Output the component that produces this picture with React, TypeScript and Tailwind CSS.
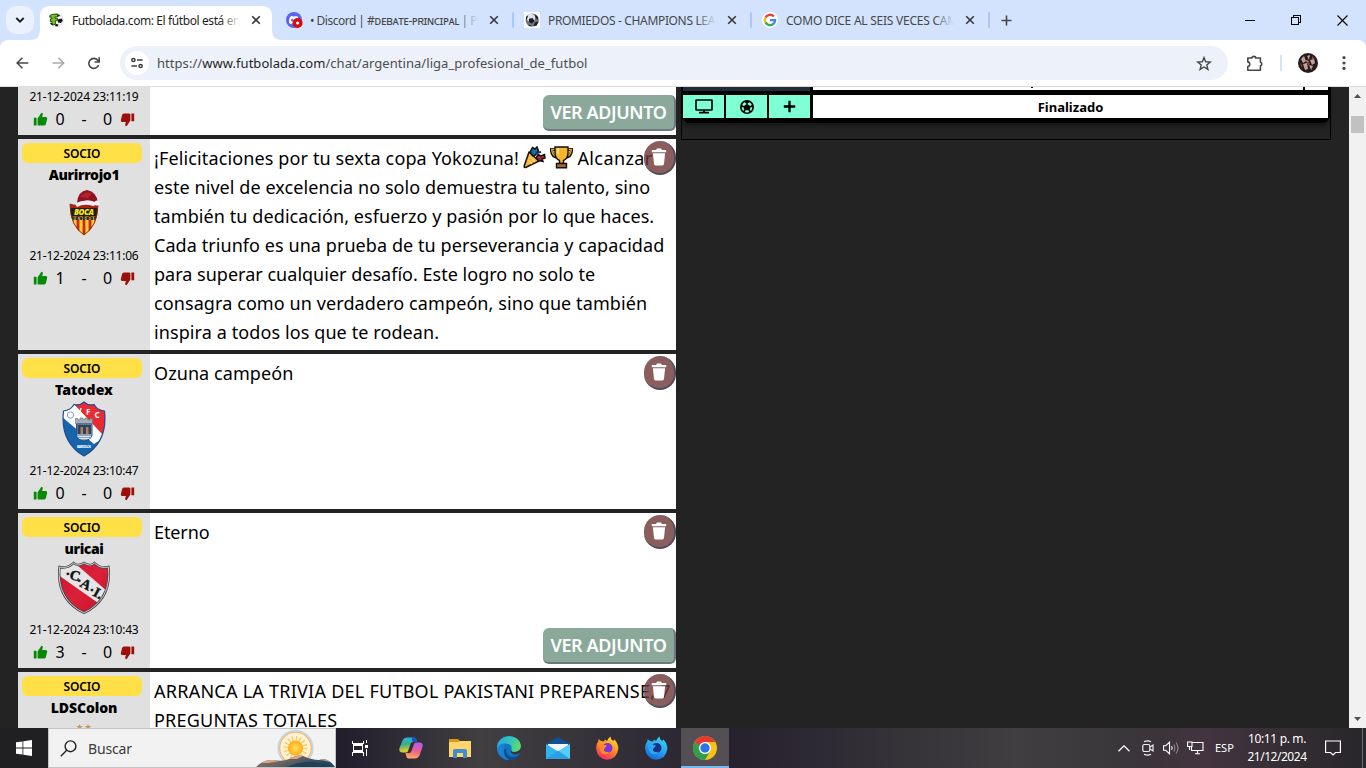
import React from "react";

const Close = () => (
  <svg width="10" height="10" viewBox="0 0 10 10" className="shrink-0">
    <path d="M1.2 1.2 8.8 8.8M8.8 1.2 1.2 8.8" stroke="#36383b" strokeWidth="1.6" fill="none" />
  </svg>
);

const FutboladaIcon = () => (
  <svg width="16" height="16" viewBox="0 0 16 16">
    <circle cx="8.5" cy="8" r="6.8" fill="#f2f2f2" stroke="#d0d0d0" strokeWidth=".6" />
    <path d="M9.5 2.2 12 3 11 4.500 9.500 4.500ZM10 7.500 13.500 6.500 14.800 8.500 13 11 10 10.500ZM8 12 10.500 12.500 9.500 14.500 7 14ZM2 11 4 11 5 13.500 3 12.500Z" fill="#111" />
    <path d="M1.800 3.500 4 2.500 9.500 2 9.800 4.500 6.800 5 6.800 6.300 9.500 6.200 9.400 8.600 7.200 8.800 7.500 12.500 4.200 12.800 4 9.500 2.500 9.500 2.500 7 4 6.800 3.800 5 1.800 5.200Z" fill="#72cc10" stroke="#15240a" strokeWidth=".8" />
  </svg>
);
const DiscordIcon = () => (
  <svg width="17" height="16" viewBox="0 0 17 16">
    <circle cx="8" cy="8" r="8" fill="#5865f2" />
    <path d="M4 5Q5 4 6.7 3.9L7.1 4.6H8.9L9.3 3.9Q11 4 12 5 13.3 7.5 13 11 12 12 10.6 12L10 11.2H6L5.4 12Q4 12 3 11 2.8 7.5 4 5Z" fill="#fff" />
    <ellipse cx="6.3" cy="8.2" rx="1.2" ry="1.4" fill="#5865f2" />
    <circle cx="11.600" cy="11" r="5" fill="#d90a0a" />
    <circle cx="11.600" cy="11" r="1.6" fill="#fff" />
  </svg>
);
const BallIcon = () => (
  <svg width="16" height="16" viewBox="0 0 16 16">
    <rect width="16" height="16" fill="#fafbff" />
    <circle cx="8.2" cy="8" r="6.6" fill="#70757e" />
    <circle cx="7" cy="6" r="4.200" fill="#dfe2e8" />
    <path d="M5 6.8 8.6 6 10.4 9 8 11.6 4.8 10ZM11 2.6 14 5 13.6 8 11.6 5.6ZM1.8 6 3 3.6 4 4.5 2.4 8ZM3.4 12.4 6 13 8.4 14.6 5.4 14ZM11 10.500 14.500 9.500 12.500 13.800 9.500 14Z" fill="#191c22" />
  </svg>
);
const GoogleIcon = () => (
  <svg width="16" height="16" viewBox="0 0 16 16">
    <circle cx="8" cy="8" r="8" fill="#fff" />
    <g fill="none" strokeWidth="2.3">
      <path d="M11.9 4.5A5.1 5.1 0 0 0 3.5 5.6" stroke="#ea4335" />
      <path d="M3.5 5.6A5.1 5.1 0 0 0 3.5 10.4" stroke="#fbbc05" />
      <path d="M3.5 10.4A5.1 5.1 0 0 0 11.4 11.8" stroke="#34a853" />
      <path d="M11.2 12A5.1 5.1 0 0 0 13.1 8.1H8" stroke="#4285f4" />
    </g>
  </svg>
);

const tabs = [
  { icon: <FutboladaIcon />, title: "Futbolada.com: El fútbol está en", active: true, fit: "tracking-[-0.4px] text-[#1f1f1f]", fade: "from-white" },
  { icon: <DiscordIcon />, title: "• Discord | #ᴅᴇʙᴀᴛᴇ-ᴘʀɪɴᴄɪᴘᴀʟ | P", active: false, fit: "tracking-[-0.51px] text-[#474747]", fade: "from-[#d3e3fd]" },
  { icon: <BallIcon />, title: "PROMIEDOS - CHAMPIONS LEA", active: false, fit: "tracking-[-0.35px] text-[#474747]", fade: "from-[#d3e3fd]" },
  { icon: <GoogleIcon />, title: "COMO DICE AL SEIS VECES CAM", active: false, fit: "tracking-[-0.24px] text-[#474747]", fade: "from-[#d3e3fd]" },
];

function TabStrip() {
  return (
    <div className="flex h-10 shrink-0 items-start bg-[#d3e3fd]">
      <button className="ml-1.5 mt-1.5 flex size-7 items-center justify-center rounded-[10px] bg-[#ebf2fe]">
        <svg width="10" height="8" viewBox="0 0 10 8"><path d="M1.3 2 5 5.7 8.7 2" stroke="#1f1f1f" strokeWidth="1.9" fill="none" /></svg>
      </button>
      <div className="ml-1 flex">
        {tabs.map((t) => (
          <div key={t.title} className="relative flex h-10 w-[238px] items-center">
            {t.active && (
              <svg className="absolute left-[-8px] top-1.5" width="252" height="34" viewBox="0 0 252 34">
                <path d="M0 34Q10 34 10 24V10Q10 0 20 0H232Q242 0 242 10V24Q242 34 252 34Z" fill="#fff" />
              </svg>
            )}
            <div className="relative flex w-full items-center pl-[10px]">
              <div className="w-6 shrink-0">{t.icon}</div>
              <div className="relative w-[168px] overflow-hidden">
                <div className={"whitespace-nowrap text-[12px] leading-4 pt-px " + t.fit}>{t.title}</div>
                <div className={"absolute inset-y-0 right-0 w-5 bg-linear-to-l to-transparent " + t.fade} />
              </div>
              <div className="ml-[11px] flex flex-1 items-center justify-between">
                <Close />
                {!t.active && <div className="h-4 w-0.5 rounded-full bg-[#a8c7fa]" />}
              </div>
            </div>
          </div>
        ))}
      </div>
      <svg className="ml-[11px] mt-[15px]" width="11" height="11" viewBox="0 0 11 11"><path d="M5.5 .5v10M.5 5.5h10" stroke="#474747" strokeWidth="1.6" /></svg>
      <div className="ml-auto flex h-10 items-center pr-[18px] text-black">
        <svg width="10" height="10" viewBox="0 0 10 10" shapeRendering="crispEdges"><path d="M0 5.5h10" stroke="#000" /></svg>
        <svg className="ml-9" width="11" height="11" viewBox="0 0 11 11" fill="none" stroke="#000" shapeRendering="crispEdges"><path d="M.5 2.5h7v7h-7zM2.5 2.5v-2h7v7h-2" /></svg>
        <svg className="ml-[35px]" width="11" height="11" viewBox="0 0 11 11" stroke="#000" strokeWidth="1.1"><path d="M.5 .5l10 10M10.5 .5l-10 10" /></svg>
      </div>
    </div>
  );
}

function Toolbar() {
  return (
    <div className="shrink-0 bg-[#d3e3fd]">
      <div className="flex h-[47px] items-center rounded-t-lg border-b border-[#dedede] bg-white text-[#474747]">
        <svg className="ml-4" width="13" height="12" viewBox="0 0 13 12" fill="none" stroke="#474747" strokeWidth="1.5"><path d="M12.3 6H1.2M6.4 .7 1.1 6l5.3 5.3" /></svg>
        <svg className="ml-[23px]" width="13" height="12" viewBox="0 0 13 12" fill="none" stroke="#a9a9a9" strokeWidth="1.5"><path d="M.5 6h11.1M6.4 .7 11.7 6l-5.3 5.3" /></svg>
        <svg className="ml-[23px]" width="12" height="13" viewBox="0 0 12 13" fill="none" stroke="#474747" strokeWidth="1.6"><path d="M10.6 8A5 5 0 1 1 9.7 3.2L11 4.6M11.2 .3V5H6.6" /></svg>
        <div className="ml-5 flex h-[34px] w-[1108px] items-center rounded-full bg-[#edf1fa] pl-[5px]">
          <div className="flex size-6 items-center justify-center rounded-full bg-white">
            <svg width="12" height="12" viewBox="0 0 12 12" fill="none" stroke="#3c3c3c" strokeWidth="1.5"><circle cx="2.4" cy="3" r="1.6" /><path d="M6 3h5.6M.4 9h5.6" /><circle cx="9.6" cy="9" r="1.6" /></svg>
          </div>
          <div className="ml-2 flex-1 whitespace-nowrap pt-0.5 text-[13px] tracking-[0.05px] text-[#4b4d50]">
            https://<span className="text-[#1f1f1f]">www.futbolada.com</span>/chat/argentina/liga_profesional_de_futbol
          </div>
          <svg className="mr-4" width="16" height="15" viewBox="0 0 16 15" fill="none" stroke="#474747" strokeWidth="1.4"><path d="M8 1.6 9.7 5.8 14.2 6.1 10.8 9 11.9 13.4 8 11 4.1 13.4 5.2 9 1.8 6.1 6.3 5.8Z" /></svg>
        </div>
        <svg className="ml-[18px]" width="17" height="17" viewBox="0 0 17 17" fill="none" stroke="#474747" strokeWidth="1.6"><path d="M1.8 3H6Q6 1.4 7.8 1.4T9.600 3H14.400V7.200Q15.800 7.400 15.800 9T14.400 10.800V15.2H1.8V11.5Q3.800 11.200 3.800 9.2T1.8 6.9Z" strokeLinejoin="round" /></svg>
        <div className="ml-[17px] h-4 w-0.5 bg-[#d3e3fd]" />
        <svg className="ml-4" width="20" height="20" viewBox="0 0 20 20">
          <circle cx="10" cy="10" r="10" fill="#2a1a1a" />
          <path d="M3 6 6 3 8 8 5 10ZM9 3 12 2 11 7ZM12 7 16 6 17 10 14 12ZM5 11 9 10 10 16 7 17ZM11 12 15 13 13 17ZM8 7 11 8 9 10Z" fill="#b5a59a" />
          <path d="M2 10 4 12 4 15ZM8 8 12 10 10 13ZM14 3 17 6 14 6Z" fill="#9a4038" />
        </svg>
        <svg className="ml-6" width="4" height="16" viewBox="0 0 4 16" fill="#474747"><circle cx="2" cy="2.6" r="1.6" /><circle cx="2" cy="8" r="1.6" /><circle cx="2" cy="13.4" r="1.6" /></svg>
      </div>
    </div>
  );
}

const Thumb = ({ down }: { down?: boolean }) => (
  <svg width="15" height="15" viewBox="0 0 15 15" className={down ? "rotate-180" : ""} fill={down ? "#9c0f0a" : "#068a06"}>
    <path d="M.8 5.8H3.6V13.6H.8ZM4.6 13V6.4L8.4 .8Q10.2 1 9.8 2.8L9.1 5H12.8Q14.4 5.2 14.2 6.8L12.9 12Q12.5 13.6 11 13.6H6Q5 13.5 4.6 13Z" />
  </svg>
);

function Votes({ up }: { up: number }) {
  return (
    <div className="flex h-6 items-center pl-[15px] text-[16px] leading-6">
      <Thumb />
      <span className="w-[24px] text-center">{up}</span>
      <span className="w-6 text-center">-</span>
      <span className="w-[23px] text-center">0</span>
      <div className="ml-px"><Thumb down /></div>
    </div>
  );
}

const DateLine = ({ time }: { time: string }) => (
  <div className="h-[18px] text-center text-[12px] leading-[20px] tracking-[-0.23px]">21-12-2024 {time}</div>
);

const Attach = () => (
  <button className="absolute bottom-1 right-0 h-[36px] w-[133px] rounded-md border-b-2 border-r-2 border-[#6f7780] bg-[#8aa99b] text-center text-[18px] font-semibold leading-[34px] tracking-[-0.38px] text-white">
    VER ADJUNTO
  </button>
);

const Trash = () => (
  <button className="absolute right-0 top-0.5 flex h-[34px] w-8 items-center justify-center rounded-full border-b-2 border-r-2 border-[#4d4f5c] bg-[#6e3636]/80">
    <svg width="16" height="18" viewBox="0 0 16 18" fill="#fff"><path d="M.8 2H5L6 .6H10L11 2H15.2V4.2H.8ZM1.9 5.2H14.1L13 16Q12.8 17.4 11.4 17.4H4.6Q3.2 17.4 3 16Z" /></svg>
  </button>
);

const BocaUnidos = () => (
  <svg width="32" height="46" viewBox="0 0 32 46">
    <clipPath id="bu"><path d="M2 14Q9 17 16 13 23 17 30 14 30 36 16 45 2 36 2 14Z" /></clipPath>
    <g clipPath="url(#bu)">
      <rect y="12" width="32" height="34" fill="#f7cf2e" />
      <path d="M4 10V46M10 10V46M16 10V46M22 10V46M28 10V46" stroke="#cf2418" strokeWidth="2.8" />
      <path d="M0 12H32V19H0Z" fill="#ae2118" />
      <path d="M3 18H29V26H3ZM0 26.500H32V30H0Z" fill="#221c12" />
    </g>
    <path d="M2 14Q9 17 16 13 23 17 30 14 30 36 16 45 2 36 2 14Z" fill="none" stroke="#8a3018" />
    <text x="16" y="25" textAnchor="middle" fontSize="8" fontWeight="900" fontStyle="italic" fill="#f5e51d" textLength="20">BOCA</text>
    <text x="16" y="29.800" textAnchor="middle" fontSize="3.500" fontWeight="700" fill="#d8c79a" textLength="21">UNIDOS</text>
    <path d="M9 13Q10 1 19 0 29 2 30 13L26 12Q20 8 9 13Z" fill="#8f1220" />
    <path d="M12 7Q16 1 24 3L20 8Z" fill="#b3232f" />
    <path d="M8 13Q17 9 27 12 28 16 25 16 16 13 9 17 7 15 8 13Z" fill="#efedf0" />
    <circle cx="29" cy="13" r="2.6" fill="#f7f5f7" />
  </svg>
);
const GilVicente = () => (
  <svg width="44" height="56" viewBox="0 0 44 56">
    <clipPath id="gv"><path d="M1.5 10Q9 9 12 3.5 18 5 22 1 26 5 32 3.5 35 9 42.500 10 46 41 22 55-2 41 1.500 10Z" /></clipPath>
    <g clipPath="url(#gv)">
      <rect width="44" height="56" fill="#1564ac" />
      <path d="M0 10 12 3 44 35 32 43 0 16Z" fill="#fff" />
      <path d="M12 3 40 33 44 33V0H12Z" fill="#ea2a33" />
    </g>
    <path d="M1.500 10Q9 9 12 3.500 18 5 22 1 26 5 32 3.500 35 9 42.500 10 46 41 22 55-2 41 1.500 10Z" fill="none" stroke="#1d4e8e" strokeWidth="1.200" />
    <circle cx="8.500" cy="14" r="3.200" fill="none" stroke="#7e9cc4" />
    <g fill="#fff" fontSize="8" fontWeight="700"><text x="14.500" y="12.500">V</text><text x="24" y="14">F</text><text x="32.500" y="17">C</text></g>
    <path d="M13.500 20V17.500H16V19H18V17H21V18.500H23V17H26V19H28V17.500H30.500V22.500H13.500Z" fill="#a9aeb6" stroke="#636d7c" strokeWidth=".6" />
    <path d="M14.500 23H30V34Q29 39 22 40 15 39 14.500 34Z" fill="#8fa2bb" stroke="#21518f" />
    <path d="M15.500 24H29V33H15.500Z" fill="#31425b" /><path d="M18.500 26H21V33H18.500ZM24 26H26.500V33H24Z" fill="#ad805a" />
    <path d="M15.500 35.500H29M17 37.500H27.500" stroke="#d9e5f2" strokeWidth="1" />
    <text x="22" y="47" textAnchor="middle" fontSize="3.500" fontWeight="700" fill="#fff" textLength="14">BARCELOS</text>
  </svg>
);
const Independiente = () => (
  <svg width="54" height="54" viewBox="0 0 52 54" preserveAspectRatio="none">
    <defs>
      <linearGradient id="cg" x1="0" y1="0" x2="1" y2="1"><stop offset="0" stopColor="#c8102e" /><stop offset=".5" stopColor="#dc2139" /><stop offset="1" stopColor="#c50d28" /></linearGradient>
      <clipPath id="ca"><path d="M2.500 6Q10 8 16 2 20 6 26 2 32 6 36 2 42 8 49.500 6 53 38 26 52-1 38 2.500 6Z" /></clipPath>
    </defs>
    <g clipPath="url(#ca)">
      <rect width="52" height="54" fill="url(#cg)" />
      <path d="M0 2H17L48 30 41 43 0 13Z" fill="#e6e6e6" />
    </g>
    <path d="M2.500 6Q10 8 16 2 20 6 26 2 32 6 36 2 42 8 49.500 6 53 38 26 52-1 38 2.500 6Z" fill="none" stroke="#4b4b4f" strokeWidth="2.400" />
    <path d="M2.500 6Q10 8 16 2 20 6 26 2 32 6 36 2 42 8 49.500 6 53 38 26 52-1 38 2.500 6Z" fill="none" stroke="#d5d5d8" strokeWidth=".9" />
    <g fontSize="14" fontWeight="900" fontFamily="Liberation Serif" fill="#141414" stroke="#141414" strokeWidth=".4">
      <text transform="rotate(15 12 17)" x="7" y="18">·C</text>
      <text transform="rotate(28 22 22)" x="18" y="25">·A</text>
      <text transform="rotate(28 34 30)" x="31" y="34">·I.</text>
    </g>
  </svg>
);
const Colon = () => (
  <svg width="30" height="20" viewBox="0 0 30 20" fill="#c2a05a"><path d="M10.500 6l1 2h2.300l-1.800 1.500.8 2.300L10.500 10.500 8.200 11.800l.8-2.300L7.200 8h2.300ZM19 6l1 2h2.300l-1.800 1.500.8 2.300L19 10.500 16.700 11.800l.8-2.300L15.700 8h2.300Z" /></svg>
);

const Party = () => (
  <svg width="23" height="23" viewBox="0 0 23 23" className="-ml-px inline-block align-[-4px]">
    <path d="M6 6 16 15 2.500 21.500Q.8 22 1.200 20Z" fill="#f9b43a" stroke="#111" strokeWidth="1.500" strokeLinejoin="round" />
    <path d="M5 14 9 18M8 11 12 16" stroke="#ffd36a" strokeWidth="1.600" />
    <path d="M7 6 9.500 1.500 12 3 14 1 15.500 5 12.500 9 10 10Z" fill="#176f9c" stroke="#111" strokeWidth="1.500" />
    <path d="M13 12 15 8.500 18 10 21.500 8.500 22 12 19 13 20 15.500 16 14.500Z" fill="#a32a38" stroke="#111" strokeWidth="1.500" />
    <path d="M13 7 18 6" stroke="#1d2c67" strokeWidth="2.200" />
  </svg>
);
const Trophy = () => (
  <svg width="23" height="23" viewBox="0 0 23 23" className="-ml-px inline-block align-[-4px]">
    <path d="M5.500 3.500H1.500Q1.500 10.500 7.500 11.500M17.500 3.500H21.500Q21.500 10.500 15.500 11.500" fill="none" stroke="#111" strokeWidth="3.200" />
    <path d="M5.500 3.500H1.700Q2 9.500 7.500 11M17.500 3.500H21.300Q21 9.500 15.500 11" fill="none" stroke="#f0a81c" strokeWidth="1.400" />
    <path d="M5 1H18V7Q18 12.500 13.500 14.500V17.500H9.500V14.500Q5 12.500 5 7Z" fill="#f9b42d" stroke="#111" strokeWidth="1.400" />
    <path d="M7 2.500H9V9Q7 8 7 6Z" fill="#ffe08a" />
    <path d="M6.500 17.500H16.500V21.800H6.500Z" fill="#a5682a" stroke="#111" strokeWidth="1.400" />
  </svg>
);

type Post = { user: string; nameFit: string; crest: React.ReactNode; crestPad: string; time: string; up: number; h: string; attach?: boolean; body: React.ReactNode };
const posts: Post[] = [
  {
    user: "Aurirrojo1", nameFit: "tracking-[-0.35px]", crest: <BocaUnidos />, crestPad: "pt-[5px]", time: "23:11:06", up: 1, h: "h-[211px]",
    body: (
      <>
        <p className="tracking-[0.13px]">¡Felicitaciones por tu sexta copa Yokozuna! <Party />{" "}<Trophy /> <span className="tracking-[0.4px]">Alcanzar</span></p>
        <p className="tracking-[0.075px]">este nivel de excelencia no solo demuestra tu talento, sino</p>
        <p className="tracking-[0.085px]">también tu dedicación, esfuerzo y pasión por lo que haces.</p>
        <p className="tracking-[0.07px]">Cada triunfo es una prueba de tu perseverancia y capacidad</p>
        <p className="tracking-[0.015px]">para superar cualquier desafío. Este logro no solo te</p>
        <p className="tracking-[0.095px]">consagra como un verdadero campeón, sino que también</p>
        <p className="tracking-[0.1px]">inspira a todos los que te rodean.</p>
      </>
    ),
  },
  { user: "Tatodex", nameFit: "tracking-[0.08px]", crest: <GilVicente />, crestPad: "pt-px", time: "23:10:47", up: 0, h: "h-[155px]", body: <p className="tracking-[0.08px]">Ozuna campeón</p> },
  { user: "uricai", nameFit: "tracking-[-0.39px]", crest: <Independiente />, crestPad: "pt-0.5", time: "23:10:43", up: 3, h: "h-[155px]", attach: true, body: <p className="tracking-[-0.1px]">Eterno</p> },
  {
    user: "LDSColon", nameFit: "tracking-[-0.1px]", crest: <Colon />, crestPad: "", time: "23:10:12", up: 0, h: "h-[155px]",
    body: (
      <>
        <p className="tracking-[0.25px]">ARRANCA LA TRIVIA DEL FUTBOL PAKISTANI PREPARENSE, 7</p>
        <p className="tracking-[0.22px]">PREGUNTAS TOTALES</p>
      </>
    ),
  },
];

function Chat() {
  return (
    <div className="ml-[18px] flex w-[658px] shrink-0 flex-col gap-1 overflow-hidden">
      <div className="flex h-12 shrink-0">
        <div className="w-[132px] bg-[#e0e0e0]">
          <DateLine time="23:11:19" />
          <div className="mt-0.5"><Votes up={0} /></div>
        </div>
        <div className="relative flex-1 bg-white"><Attach /></div>
      </div>
      {posts.map((p) => (
        <div key={p.user} className={"flex shrink-0 " + p.h}>
          <div className="w-[132px] bg-[#e0e0e0] pt-1">
            <div className="ml-1 h-5 w-[120px] rounded-md bg-[#ffe047] text-center text-[12px] font-semibold leading-[22px] tracking-[-0.15px]">SOCIO</div>
            <div className={"h-[22px] text-center text-[14px] font-black leading-[24px] " + p.nameFit}>{p.user}</div>
            <div className={"flex h-[61px] justify-center " + p.crestPad}>{p.crest}</div>
            <DateLine time={p.time} />
            <div className="mt-0.5"><Votes up={p.up} /></div>
          </div>
          <div className="relative flex-1 bg-white">
            <div className="whitespace-nowrap pl-1 pt-[5px] text-[18px] leading-[29px]">{p.body}</div>
            <Trash />
            {p.attach && <Attach />}
          </div>
        </div>
      ))}
    </div>
  );
}

function MatchPanel() {
  return (
    <div className="ml-[5px] h-[53px] w-[650px] shrink-0 border border-t-0 border-black">
      <div className="flex h-[36px] w-[648px] flex-col rounded-b-lg bg-black pl-px pr-0.5 shadow-[0_3px_5px_rgba(0,0,0,0.35)]">
        <div className="flex h-[3px]">
          <div className="h-1 w-[127px] bg-[#222c3d]" />
          <div className="ml-[3px] flex h-[3px] w-[490px] justify-end bg-white pr-[270px]"><div className="h-px w-0.5 bg-black" /></div>
          <div className="ml-0.5 flex-1 bg-white" />
        </div>
        <div className="mt-[5px] flex h-[23px] gap-0.5">
          <div className="flex w-[41px] items-center justify-center bg-[#7fffd4]">
            <svg width="18" height="15" viewBox="0 0 18 15" fill="none" stroke="#000" strokeWidth="1.700"><path d="M1 1.500Q1 1 1.500 1H16.500Q17 1 17 1.500V10.500Q17 11 16.500 11H1.500Q1 11 1 10.500ZM9 11V13.500M4 13.700H14" /></svg>
          </div>
          <div className="flex w-[41px] items-center justify-center bg-[#7fffd4]">
            <svg width="14" height="14" viewBox="0 0 14 14">
              <circle cx="7" cy="7" r="7" fill="#000" />
              <path d="M4.300 2.200 6.300 3.200V4.200L4 5.900 2.700 5.500 2.300 4.300ZM9.700 2.200 7.700 3.200V4.200L10 5.900 11.300 5.500 11.700 4.300ZM1.600 7 3.400 7.200 4.200 9.700 3.500 10.700 2.400 10.300ZM12.400 7 10.600 7.200 9.800 9.700 10.500 10.700 11.600 10.300ZM5.500 10.300H8.500L9.200 11.500 8.300 12.600H5.700L4.800 11.500Z" fill="#7fffd4" />
            </svg>
          </div>
          <div className="flex w-[41px] items-center justify-center bg-[#7fffd4]">
            <svg width="13" height="13" viewBox="0 0 13 13"><path d="M6.500 .8V12.200M.8 6.500H12.200" stroke="#000" strokeWidth="2.300" /></svg>
          </div>
          <div className="ml-px flex-1 bg-white text-center text-[13px] font-bold leading-[24px]">Finalizado</div>
        </div>
      </div>
    </div>
  );
}

function Scrollbar() {
  return (
    <div className="ml-auto flex w-[17px] flex-col items-center justify-between bg-[#f1f1f1]">
      <div className="flex flex-col items-center">
        <svg width="17" height="29" viewBox="0 0 17 29"><path d="M5 11 8.500 7 12 11Z" fill="#505050" /></svg>
        <div className="h-[17px] w-[13px] bg-[#c1c1c1]" />
      </div>
      <svg width="17" height="17" viewBox="0 0 17 17"><path d="M5 6 8.500 10 12 6Z" fill="#505050" /></svg>
    </div>
  );
}

const Copilot = () => (
  <svg width="24" height="22" viewBox="0 0 24 22">
    <defs>
      <linearGradient id="c1" x1="0" y1="0" x2=".2" y2="1"><stop stopColor="#22b6f2" /><stop offset=".5" stopColor="#3cae8c" /><stop offset="1" stopColor="#f5cf1c" /></linearGradient>
      <linearGradient id="c2" x1=".5" y1="0" x2=".3" y2="1"><stop stopColor="#b45ae8" /><stop offset=".5" stopColor="#ee5f8e" /><stop offset="1" stopColor="#fdb05e" /></linearGradient>
    </defs>
    <path d="M8 .5H15Q17 .5 17.500 3L18 5H14Q12 5 11.500 7L9 14Q8.500 15.500 7 15.500H3Q-.5 15 .5 11L3.500 3.500Q5 .5 8 .5Z" fill="url(#c1)" />
    <path d="M13 .5H15.500Q17 .8 17.500 3L18 5H14.500Q12.500 4 13 .5Z" fill="#1a4fd0" />
    <path d="M16 21.500H9.500Q7.500 21 7 18.500L6.500 16H10Q12 16 12.500 14L15 7Q15.500 5.500 17 5.500H21Q24.500 6 23.500 10L20.500 18.500Q19 21.500 16 21.500Z" fill="url(#c2)" />
  </svg>
);
const Folder = () => (
  <svg width="22" height="19" viewBox="0 0 22 19"><path d="M0 0H9L11 2H22V18H0Z" fill="#d99a14" /><path d="M0 3H9L11 2H22V18H0Z" fill="#fed56b" /><path d="M4 19V12Q4 10 6 10H16Q18 10 18 12V19H14V14H8V19Z" fill="#3b8fd0" /></svg>
);
const Edge = () => (
  <svg width="24" height="24" viewBox="0 0 24 24">
    <defs><linearGradient id="e1" x1="0" y1=".3" x2="1" y2=".5"><stop stopColor="#2ba6e2" /><stop offset=".6" stopColor="#35c6b8" /><stop offset="1" stopColor="#67dc58" /></linearGradient></defs>
    <circle cx="12" cy="12" r="12" fill="#1373c4" />
    <path d="M0 11Q1 1 12 0 23 1 24 10 23 16 17 16 13 16 14.500 13 15 8 9 7.500 3 7.500 0 13Z" fill="url(#e1)" />
    <path d="M9 7.500Q5 10 7 16 10 22 18 22 12 26 6 22 0 18 0 12 3 7 9 7.500Z" fill="#1b83d2" />
    <path d="M9.500 12Q8 20 15 21 20 21 22.500 18 19 24 12.500 24 6 21 7 14Z" fill="#0d4c94" />
    <path d="M14.500 13Q12 17 17 18.500 21 19 24 16V12Q22 16 17 16 13.500 16 14.500 13Z" fill="#36373c" />
  </svg>
);
const Mail = () => (
  <svg width="24" height="22" viewBox="0 0 24 22"><path d="M0 7 12 0 24 7V12H0Z" fill="#0f5296" /><path d="M2 7H22V14L12 17 2 14Z" fill="#f2f4f8" /><path d="M0 7 12 14.500 24 7V22H0Z" fill="#30b4ee" /><path d="M12 14.500 24 7V22Z" fill="#56cdf8" /><path d="M0 22 12 13.500 24 22Z" fill="#2a9fe4" /></svg>
);
const Fox = ({ id, a, b, c, core }: { id: string; a: string; b: string; c: string; core: string }) => (
  <svg width="24" height="24" viewBox="0 0 24 24">
    <defs><linearGradient id={id} x1=".8" y1="0" x2=".3" y2="1"><stop stopColor={a} /><stop offset=".5" stopColor={b} /><stop offset="1" stopColor={c} /></linearGradient></defs>
    <path d="M1 12Q1 8 3.500 5V3L6 5 9 5.500 10 3.500 12 5Q13 2 15.500 .5 15.500 3.500 18 5L19.500 3.500Q23.500 8 23.300 13 22 23 12 23.700 2 23 1 12Z" fill={`url(#${id})`} />
    <circle cx="12.500" cy="12" r="5" fill={core} />
    <path d="M4 8 8 8.500 12 9.500 10 12Q8.500 12.500 9 14.500 11 17 15 15.500 11 20 6.500 17 4 14 4 8Z" fill={b} />
  </svg>
);
const Chrome = () => (
  <svg width="24" height="24" viewBox="0 0 24 24">
    <circle cx="12" cy="12" r="12" fill="#fbc116" />
    <path d="M1.600 6A12 12 0 0 1 22.400 6H12A6 6 0 0 0 6.800 9Z" fill="#e33b2e" />
    <path d="M1.600 6A12 12 0 0 0 12 24L17.200 15A6 6 0 0 1 6.800 15Z" fill="#2f9e4f" />
    <path d="M1.600 6 6.800 15 9 9Z" fill="#2f9e4f" /><path d="M1.600 6H12L7 9.500Z" fill="#e33b2e" />
    <circle cx="12" cy="12" r="6" fill="#fff" /><circle cx="12" cy="12" r="4.700" fill="#2b73e8" />
  </svg>
);

const Weather = () => (
  <svg width="79" height="38" viewBox="0 0 79 38" className="ml-auto self-end">
    <defs>
      <linearGradient id="hill" x1="0" y1="0" x2="1" y2=".4"><stop stopColor="#8d7a72" /><stop offset=".5" stopColor="#6b625f" /><stop offset="1" stopColor="#1f4662" /></linearGradient>
      <radialGradient id="sun"><stop stopColor="#ffdf5e" /><stop offset="1" stopColor="#ffab17" /></radialGradient>
    </defs>
    <circle cx="39.500" cy="19" r="17.300" fill="#fdf3dc" stroke="#b9d7ee" strokeWidth="1.500" />
    <circle cx="39.500" cy="19" r="15.800" fill="#fff3d6" stroke="#f6b66f" strokeWidth="1.300" />
    <circle cx="39.500" cy="19" r="9.500" fill="none" stroke="#ffc65a" strokeWidth="5" strokeDasharray="1.200 2.530" />
    <circle cx="39.500" cy="19" r="7.600" fill="url(#sun)" />
    <path d="M0 38Q8 30 17 31 27 33 33 30 41 25 47 27 56 31 63 31 72 28 79 38Z" fill="url(#hill)" />
    <path d="M5 34Q10 30.500 17 31L24 32 12 34ZM33 30Q41 25 47 27L41 30ZM63 31Q70 29 74 33L68 31.500Z" fill="#d6a588" />
    <path d="M30 38Q46 32 58 33 70 35 76 38Z" fill="#1f4158" />
  </svg>
);

function Taskbar() {
  return (
    <div className="flex h-10 shrink-0 items-stretch bg-[#201f25] text-white">
      <div className="flex w-12 items-center justify-center bg-[#201f22]">
        <svg width="16" height="16" viewBox="0 0 16 16" fill="#fff"><path d="M0 2.300 6.500 1.400V7.600H0ZM7.300 1.200 16 0V7.600H7.300ZM0 8.400H6.500V14.600L0 13.700ZM7.300 8.400H16V16L7.300 14.800Z" /></svg>
      </div>
      <div className="flex w-[288px] items-center border border-[#c3c3c5] bg-[#f2f2f2] pl-[11px]">
        <svg width="17" height="17" viewBox="0 0 17 17" fill="none" stroke="#222" strokeWidth="1.400"><circle cx="10.500" cy="6.300" r="5.400" /><path d="M6.700 10.200 .8 16.200" /></svg>
        <span className="ml-[11px] text-[14px] tracking-[-0.14px] text-[#3b3b3b]">Buscar</span>
        <Weather />
      </div>
      <div className="flex flex-1 bg-linear-to-r from-[#211d2c] via-[#413f41] via-[14%] to-[#282330] to-[38%]">
        <div className="flex w-12 items-center justify-center">
          <svg width="17" height="16" viewBox="0 0 17 16" fill="none" stroke="#fff" strokeWidth="1.200" shapeRendering="crispEdges"><path d="M.5 .5V3.500H11.500V.5M1.500 5H10.500V11H1.500ZM.5 15.500V12.500H11.500V15.500M14.500 0V3M14.500 9V16" /><path d="M13 4.500H16V7.500H13Z" fill="#fff" stroke="none" /></svg>
        </div>
        <div className="ml-[3px] flex gap-px">
          <div className="flex w-12 items-center justify-center"><Copilot /></div>
          <div className="flex w-12 items-center justify-center"><Folder /></div>
          <div className="flex w-12 items-center justify-center"><Edge /></div>
          <div className="flex w-12 items-center justify-center"><Mail /></div>
          <div className="flex w-12 items-center justify-center"><Fox id="f1" a="#ffe02e" b="#ff8a25" c="#f5256a" core="#7a35d8" /></div>
          <div className="flex w-12 items-center justify-center"><Fox id="f2" a="#36d6f5" b="#2aa6f0" c="#1666d8" core="#1c2f86" /></div>
          <div className="flex w-12 items-center justify-center border-b-2 border-[#76b9ed] bg-[#534f55] pt-0.5"><Chrome /></div>
        </div>
        <div className="ml-auto flex w-[637px] items-center bg-linear-to-r from-[#26212d] via-[#403e40] via-45% to-[#28272b]">
          <div className="flex flex-1 items-center self-stretch bg-linear-to-r from-transparent from-60% via-[#43343f] via-75% to-[#28272b] pl-[389px]">
            <svg width="12" height="7" viewBox="0 0 12 7" fill="none" stroke="#fff" strokeWidth="1.300"><path d="M.5 6.300 6 .9l5.500 5.400" /></svg>
            <svg className="ml-3" width="12" height="16" viewBox="0 0 12 16" fill="none" stroke="#eee" strokeWidth="1.200"><rect x=".8" y="4.500" width="7" height="7" rx="1.500" /><path d="M8 7 11 5V11L8 9M2 1.800Q5.500 0 9 1.800M2 14.200Q5.500 16 9 14.200" /></svg>
            <svg className="ml-[9px]" width="17" height="14" viewBox="0 0 17 14" fill="none" stroke="#fff" strokeWidth="1.100"><path d="M.6 4.700H2.800L6.500 1.200V12.800L2.800 9.300H.6ZM8.500 5.300Q9.700 7 8.500 8.700" /><path d="M10.800 3.500Q13 7 10.800 10.500M13 1.500Q17 7 13 12.500" stroke="#8d858d" /></svg>
            <svg className="ml-[7px]" width="17" height="14" viewBox="0 0 17 14" fill="none" stroke="#fff" strokeWidth="1.100"><path d="M5.500 1.500H16V9.500H4.500V6M.6 1H5V5.500H.6ZM2.500 5.500V9M8 12.800H13M10.500 9.500V12.500" /></svg>
            <span className="ml-[11px] w-[21px] text-[11px] leading-4">ESP</span>
            <div className="ml-2.5 w-[62px] text-center text-[12px] leading-[18px]">
              <div className="tracking-[-0.36px]">10:11 p. m.</div>
              <div className="tracking-[-0.48px]">21/12/2024</div>
            </div>
            <svg className="ml-[17px]" width="16" height="16" viewBox="0 0 16 16" fill="none" stroke="#fff" strokeWidth="1.200"><path d="M.6 1H15.400V12.500H10.500L8 15 5.500 12.500H.6Z" /></svg>
          </div>
          <div className="mr-[3px] w-px self-stretch bg-[#6b6a6d]" />
        </div>
      </div>
    </div>
  );
}

export default function App() {
  return (
    <div className="flex h-[768px] w-[1366px] flex-col overflow-hidden font-['Noto_Sans',sans-serif] text-black">
      <TabStrip />
      <Toolbar />
      <div className="flex min-h-0 flex-1 bg-[#232323]">
        <Chat />
        <MatchPanel />
        <Scrollbar />
      </div>
      <Taskbar />
    </div>
  );
}
